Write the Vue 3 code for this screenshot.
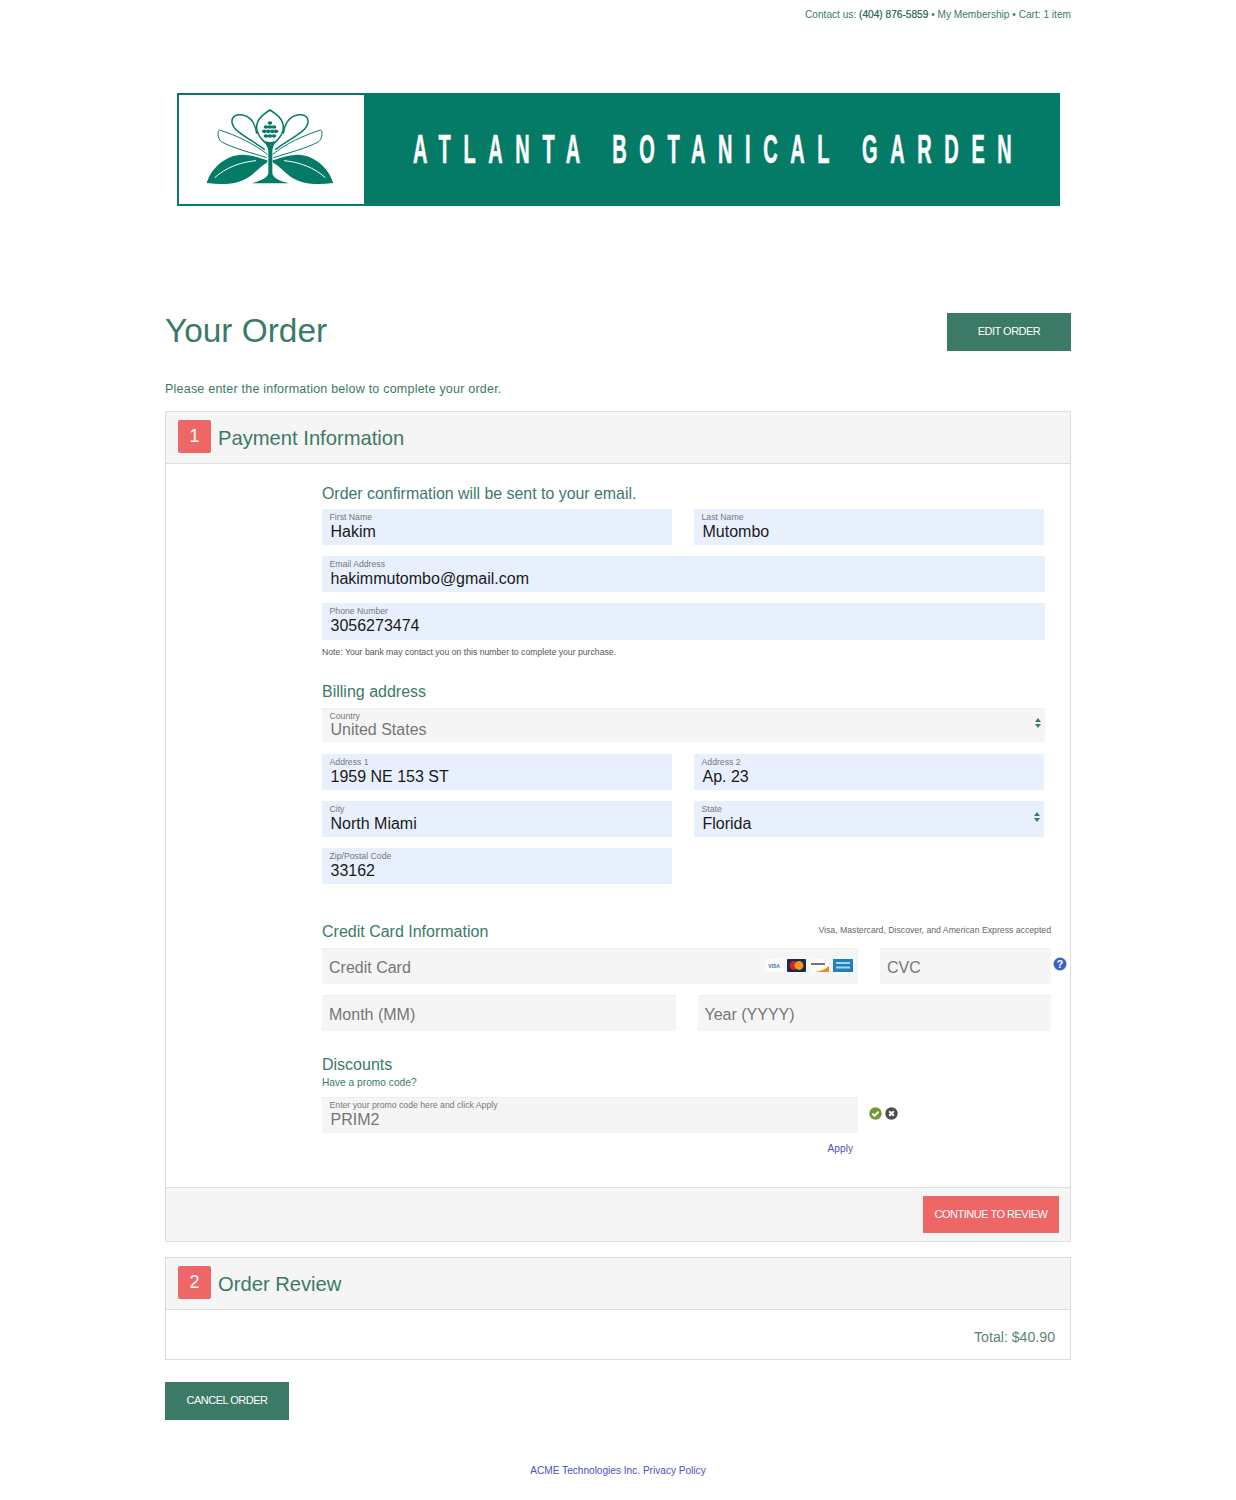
<script setup>
const nameFields = [
  { label: 'First Name', value: 'Hakim' },
  { label: 'Last Name', value: 'Mutombo' }
];
const cones = [
  [210, 54, 7], [198, 66, 7], [210, 66, 7], [222, 66, 7],
  [193, 79, 7], [205, 79, 7], [217, 79, 7], [228, 79, 7],
  [198, 93, 7], [210, 93, 7], [222, 93, 7]
];
</script>

<template>
  <div class="page">
    <div class="topbar">
      Contact us: <b>(404) 876-5859</b> • My Membership • Cart: 1 item
    </div>

    <div class="banner">
      <div class="banner-logo">
        <svg viewBox="-63 -30 555 327" width="185" height="109">
          <defs>
            <g id="half-flower">
              <path d="M194 134C150 100 100 82 96 52C94 34 110 26 128 30C155 36 166 56 170 86" fill="none" stroke="#047b66" stroke-width="4.5" />
              <path d="M202 148C165 118 112 92 58 75C52 78 52 100 64 110C100 130 150 142 200 158" fill="none" stroke="#047b66" stroke-width="3" stroke-linejoin="round" />
              <path d="M202 166C178 158 156 150 126 149C80 150 34 186 20 234C70 241 114 238 147 216C167 202 182 184 202 172Z" fill="#047b66" />
              <path d="M44 218C78 188 118 172 168 167" fill="none" stroke="#fff" stroke-width="3" />
            </g>
          </defs>
          <path d="M210 15C190 28 170 42 170 66C170 92 192 110 210 126C228 110 250 92 250 66C250 42 230 28 210 15Z" fill="none" stroke="#047b66" stroke-width="4.5" />
          <use href="#half-flower" />
          <use href="#half-flower" transform="translate(420 0) scale(-1 1)" />
          <g fill="#047b66">
            <ellipse v-for="(c, i) in cones" :key="i" :cx="c[0]" :cy="c[1]" :rx="c[2]" ry="5.5" />
            <path d="M196 108C204 112 216 112 224 108C223 120 218 128 217 136L217 205C219 220 240 228 266 235H154C180 228 203 220 205 205L205 136C204 128 197 120 196 108Z" />
          </g>
        </svg>
      </div>
      <div class="banner-title"><span>ATLANTA BOTANICAL GARDEN</span></div>
    </div>

    <div class="order-head">
      <h1>Your Order</h1>
      <button class="btn green edit">EDIT ORDER</button>
    </div>
    <p class="intro">Please enter the information below to complete your order.</p>

    <section class="panel">
      <header class="panel-head">
        <span class="step">1</span>
        <h2>Payment Information</h2>
      </header>

      <div class="panel-body">
        <div class="section-title first">Order confirmation will be sent to your email.</div>
        <div class="row pair">
          <div v-for="f in nameFields" :key="f.label" class="field blue half">
            <label>{{ f.label }}</label>
            <span>{{ f.value }}</span>
          </div>
        </div>
        <div class="field blue full">
          <label>Email Address</label>
          <span>hakimmutombo@gmail.com</span>
        </div>
        <div class="field blue full phone">
          <label>Phone Number</label>
          <span>3056273474</span>
        </div>
        <div class="note">Note: Your bank may contact you on this number to complete your purchase.</div>

        <div class="section-title billing">Billing address</div>
        <div class="field grey full country">
          <label>Country</label>
          <span>United States</span>
          <i class="arrows"></i>
        </div>
        <div class="row pair">
          <div class="field blue half"><label>Address 1</label><span>1959 NE 153 ST</span></div>
          <div class="field blue half"><label>Address 2</label><span>Ap. 23</span></div>
        </div>
        <div class="row pair">
          <div class="field blue half"><label>City</label><span>North Miami</span></div>
          <div class="field blue half">
            <label>State</label>
            <span>Florida</span>
            <i class="arrows"></i>
          </div>
        </div>
        <div class="row pair">
          <div class="field blue half"><label>Zip/Postal Code</label><span>33162</span></div>
        </div>

        <div class="card-head">
          <div class="section-title">Credit Card Information</div>
          <small>Visa, Mastercard, Discover, and American Express accepted</small>
        </div>
        <div class="row card-row">
          <div class="field grey plain card-number">
            <span>Credit Card</span>
            <div class="cards">
              <svg width="18" height="13" viewBox="0 0 18 13">
                <rect width="18" height="13" fill="#fbfbfb" />
                <text x="9" y="9" text-anchor="middle" class="card-text" fill="#3d6fa8">VISA</text>
              </svg>
              <svg width="19" height="13" viewBox="0 0 19 13">
                <rect width="19" height="13" rx="1" fill="#1c2a4a" />
                <circle cx="7" cy="6.5" r="4.4" fill="#d8232a" />
                <circle cx="12" cy="6.5" r="4.4" fill="#f09a1c" />
              </svg>
              <svg width="19" height="13" viewBox="0 0 19 13">
                <rect width="19" height="13" fill="#fbfbfb" />
                <rect x="1" y="4" width="14" height="2" fill="#777" />
                <path d="M5 13C11 12 16 10 19 7V13Z" fill="#ee8a1e" />
              </svg>
              <svg width="20" height="13" viewBox="0 0 20 13">
                <rect width="20" height="13" fill="#2180b9" />
                <rect x="3" y="3" width="14" height="2" fill="#a9d3ea" />
                <rect x="3" y="7.5" width="14" height="2" fill="#a9d3ea" />
              </svg>
            </div>
          </div>
          <div class="field grey plain cvc"><span>CVC</span></div>
          <svg class="help" width="14" height="14" viewBox="0 0 14 14">
            <circle cx="7" cy="7" r="6.5" fill="#3a62c4" />
            <text x="7" y="10.6" text-anchor="middle" class="help-text" fill="#fff">?</text>
          </svg>
        </div>
        <div class="row expiry">
          <div class="field grey plain"><span>Month (MM)</span></div>
          <div class="field grey plain"><span>Year (YYYY)</span></div>
        </div>

        <div class="section-title discounts">Discounts</div>
        <div class="promo-hint">Have a promo code?</div>
        <div class="row promo-row">
          <div class="field grey promo">
            <label>Enter your promo code here and click Apply</label>
            <span>PRIM2</span>
          </div>
          <svg class="status" width="13" height="13" viewBox="0 0 13 13">
            <circle cx="6.5" cy="6.5" r="6.2" fill="#6f9a2f" />
            <path d="M3.4 6.6L5.6 8.8L9.6 4.6" fill="none" stroke="#fff" stroke-width="2" />
          </svg>
          <svg class="status" width="13" height="13" viewBox="0 0 13 13">
            <circle cx="6.5" cy="6.5" r="6.2" fill="#4d4d4d" />
            <path d="M4.2 4.2L8.8 8.8M8.8 4.2L4.2 8.8" fill="none" stroke="#fff" stroke-width="2" />
          </svg>
        </div>
        <div class="apply"><a>Apply</a></div>
      </div>

      <footer class="panel-foot">
        <button class="btn coral">CONTINUE TO REVIEW</button>
      </footer>
    </section>

    <section class="panel review">
      <header class="panel-head">
        <span class="step">2</span>
        <h2>Order Review</h2>
      </header>
      <div class="total">Total: $40.90</div>
    </section>

    <button class="btn green cancel">CANCEL ORDER</button>

    <div class="legal">ACME Technologies Inc. Privacy Policy</div>
  </div>
</template>

<style>
body {
  background: #fff;
}
</style>

<style scoped>
.page {
  width: 906px;
  height: 1500px;
  margin: 0 auto;
  font-family: "Liberation Sans", Arial, sans-serif;
  color: #3b7a66;
  overflow: hidden;
}

.topbar {
  height: 30px;
  line-height: 30px;
  text-align: right;
  font-size: 10.15px;
}
.topbar b {
  font-weight: 400;
  color: #1f5f4c;
  -webkit-text-stroke: 0.2px #1f5f4c;
}

.banner {
  width: 883px;
  height: 113px;
  margin: 63px 0 0 12px;
  display: flex;
  background: #047b66;
  border: 2px solid #047b66;
  box-sizing: border-box;
}
.banner-logo {
  width: 185px;
  flex: none;
  background: #fff;
  display: flex;
  align-items: center;
  justify-content: center;
}
.banner-title {
  flex: 1;
  min-width: 0;
  padding-left: 49px;
  line-height: 109px;
  color: #fff;
  font-weight: 700;
  font-size: 40px;
  white-space: nowrap;
}
.banner-title span {
  display: inline-block;
  letter-spacing: 25.25px;
  word-spacing: 4px;
  -webkit-text-stroke: 0.6px #fff;
  transform: scaleX(0.5);
  transform-origin: left center;
}

.order-head {
  margin-top: 107px;
  display: flex;
  justify-content: space-between;
  align-items: flex-start;
}
h1 {
  margin: 0;
  font-size: 33.4px;
  font-weight: 400;
  line-height: 36px;
}

.btn {
  border: 0;
  color: #fff;
  font-family: inherit;
  font-size: 11px;
  letter-spacing: -0.5px;
  padding: 0 0 2px;
}
.green {
  background: #3b7a66;
}
.coral {
  background: #ee6666;
  width: 136px;
  height: 37px;
}
.edit {
  width: 124px;
  height: 38px;
}
.cancel {
  display: block;
  width: 124px;
  height: 38px;
  margin-top: 22px;
}

.intro {
  margin: 30px 0 0;
  font-size: 12.5px;
  line-height: 16px;
  letter-spacing: 0.22px;
}

.panel {
  margin-top: 14px;
  border: 1px solid #ddd;
}
.panel-head {
  height: 52px;
  display: flex;
  align-items: flex-start;
  gap: 7px;
  padding: 8px 0 0 12px;
  box-sizing: border-box;
  background: #f5f5f5;
  border-bottom: 1px solid #ddd;
}
.step {
  width: 33px;
  height: 33px;
  border-radius: 2px;
  background: #ee6666;
  color: #fff;
  font-size: 18px;
  line-height: 33px;
  text-align: center;
}
h2 {
  margin: 0;
  font-size: 20.2px;
  font-weight: 400;
  line-height: 36px;
}

.panel-body {
  height: 723px;
  padding-left: 156px;
}
.section-title {
  font-size: 16px;
  line-height: 20px;
}
.first {
  padding-top: 20px;
  margin-bottom: 5px;
  font-size: 15.9px;
}
.billing {
  margin-top: 25px;
  margin-bottom: 6px;
}
.discounts {
  margin-top: 24px;
}

.row {
  display: flex;
}
.pair {
  gap: 22px;
  margin-bottom: 11px;
}
.field {
  position: relative;
  height: 36px;
  box-sizing: border-box;
  padding: 4px 0 0 7.5px;
  display: flex;
  flex-direction: column;
}
.field label {
  font-size: 8.7px;
  line-height: 9px;
  color: #777;
}
.field span {
  margin-top: 1px;
  padding-left: 1px;
  font-size: 16px;
  line-height: 17px;
}
.blue {
  background: #e8f0fe;
}
.blue span {
  color: #1a1a1a;
}
.grey {
  background: #f5f5f5;
  border-top: 1px solid #eee;
  padding-top: 3px;
}
.grey span {
  color: #757575;
}
.half {
  width: 350px;
}
.full {
  width: 723px;
  margin-bottom: 11px;
}
.phone {
  height: 37px;
  margin-bottom: 0;
}
.country {
  height: 34px;
  margin-bottom: 12px;
}
.country span {
  margin-top: 0;
}
.note {
  margin-top: 7px;
  font-size: 8.68px;
  line-height: 10px;
  color: #555;
}

.arrows {
  position: absolute;
  right: 2px;
  top: 11px;
  width: 8px;
  height: 10px;
}
.country .arrows {
  top: 9px;
}
.arrows::before,
.arrows::after {
  content: "";
  position: absolute;
  left: 0;
  border-left: 3.5px solid transparent;
  border-right: 3.5px solid transparent;
}
.arrows::before {
  top: 0;
  border-bottom: 4px solid #3b7a66;
}
.arrows::after {
  bottom: 0;
  border-top: 4px solid #3b7a66;
}

.plain {
  padding: 10px 0 0 6px;
}
.plain span {
  margin-top: 0;
}
.card-head {
  width: 729px;
  margin-top: 38px;
  display: flex;
  justify-content: space-between;
  align-items: flex-start;
}
.card-head small {
  font-size: 8.7px;
  line-height: 16px;
  color: #666;
}
.card-row {
  position: relative;
  gap: 22px;
  margin-top: 6px;
}
.card-number {
  width: 536px;
}
.cards {
  position: absolute;
  right: 5px;
  top: 10px;
  display: flex;
  gap: 4px;
}
.card-text {
  font-size: 5px;
  font-weight: 700;
}
.cvc {
  width: 171px;
}
.help {
  position: absolute;
  left: 731px;
  top: 9px;
}
.help-text {
  font-size: 10.5px;
  font-weight: 700;
}
.expiry {
  width: 729px;
  gap: 22px;
  margin-top: 11px;
}
.expiry .field {
  flex: 1;
}
.promo-hint {
  margin-top: 2px;
  font-size: 10.2px;
  line-height: 12px;
}
.promo-row {
  margin-top: 8px;
  align-items: flex-start;
  gap: 3px;
}
.promo {
  width: 536px;
  margin-right: 8px;
}
.status {
  margin-top: 10px;
}
.apply {
  width: 531px;
  margin-top: 10px;
  text-align: right;
  font-size: 10.2px;
  line-height: 12px;
  color: #4a50c0;
}

.panel-foot {
  height: 54px;
  box-sizing: border-box;
  padding: 8px 11px 0 0;
  display: flex;
  justify-content: flex-end;
  align-items: flex-start;
  background: #f5f5f5;
  border-top: 1px solid #ddd;
}

.review {
  margin-top: 15px;
}
.total {
  height: 49px;
  padding-right: 15px;
  line-height: 54px;
  text-align: right;
  font-size: 14.15px;
  color: #5d8577;
}

.legal {
  margin-top: 45px;
  text-align: center;
  font-size: 10.1px;
  line-height: 12px;
  color: #4a50c0;
}
</style>
